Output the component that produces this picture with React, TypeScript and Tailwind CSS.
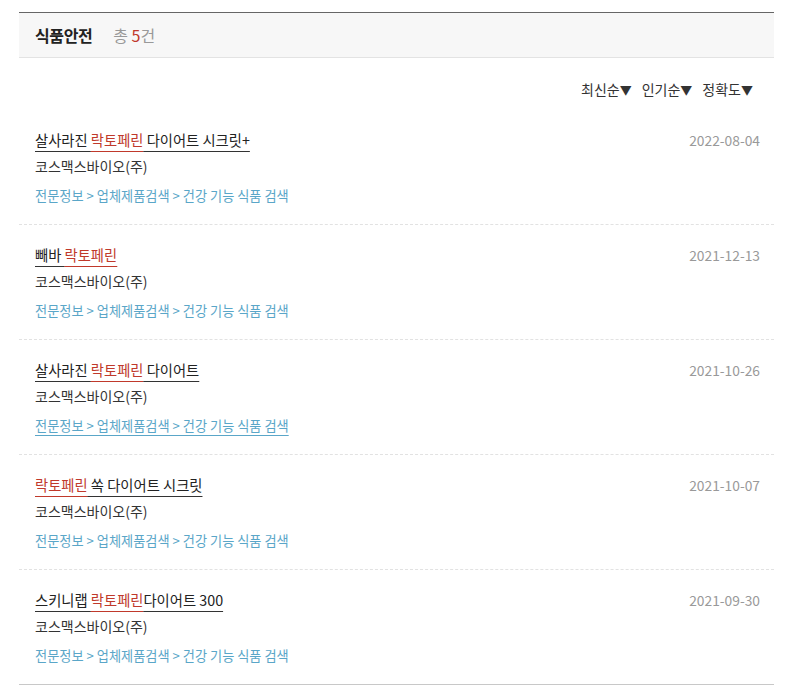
import React from "react";

interface Item {
  before: string;
  hit: string;
  after: string;
  date: string;
}

const items: Item[] = [
  { before: "살사라진 ", hit: "락토페린", after: " 다이어트 시크릿+", date: "2022-08-04" },
  { before: "빼바 ", hit: "락토페린", after: "", date: "2021-12-13" },
  { before: "살사라진 ", hit: "락토페린", after: " 다이어트", date: "2021-10-26" },
  { before: "", hit: "락토페린", after: " 쏙 다이어트 시크릿", date: "2021-10-07" },
  { before: "스키니랩 ", hit: "락토페린", after: "다이어트 300", date: "2021-09-30" },
];

const font = { fontFamily: '"Noto Sans CJK KR", "Noto Sans", sans-serif' };

export default function App() {
  return (
    <div className="w-[789px] h-[691px] bg-white overflow-hidden" style={font}>
      <div className="ml-[19px] mt-[12px] w-[755px]">
        {/* header */}
        <div className="h-[46px] border-t-[1.5px] border-[#666] border-b border-b-[#e3e3e3] bg-[#f7f7f7] flex items-center pl-4 gap-[21px]">
          <span className="text-[16px] font-bold text-[#222] tracking-tight">식품안전</span>
          <span className="text-[16px] text-[#999]">
            총 <span className="text-[#c0392b]">5</span>건
          </span>
        </div>

        {/* sort */}
        <div className="flex justify-end gap-[10px] pt-[21px] pr-[21px] mb-[10px] text-[14px] leading-[20px] text-[#333]">
          <span>최신순<span className="text-[12px]">▼</span></span>
          <span>인기순<span className="text-[12px]">▼</span></span>
          <span>정확도<span className="text-[12px]">▼</span></span>
        </div>

        {/* list */}
        <ul>
          {items.map((it, i) => (
            <li
              key={i}
              className={
                "flex justify-between pl-4 pr-[14px] pt-5 pb-[18px] " +
                (i === items.length - 1
                  ? "border-b border-[#c8c8c8]"
                  : "border-b border-dashed border-[#e2e2e2]")
              }
            >
              <div className="flex flex-col">
                <a className="text-[14.3px] leading-[20px] text-[#222] underline underline-offset-[5px] decoration-[#333]">
                  {it.before}
                  <span className="text-[#c0392b] decoration-[#c0392b] underline">{it.hit}</span>
                  {it.after}
                </a>
                <div className="mt-[6px] text-[14px] leading-[20px] text-[#333]">코스맥스바이오(주)</div>
                <div
                  className={
                    "mt-[10px] text-[13.2px] leading-[20px] text-[#5aa6c8] " +
                    (i === 2 ? "underline underline-offset-[4px]" : "")
                  }
                >
                  전문정보 &gt; 업체제품검색 &gt; 건강 기능 식품 검색
                </div>
              </div>
              <div className="text-[13.8px] leading-[20px] text-[#999]">{it.date}</div>
            </li>
          ))}
        </ul>
      </div>
    </div>
  );
}
